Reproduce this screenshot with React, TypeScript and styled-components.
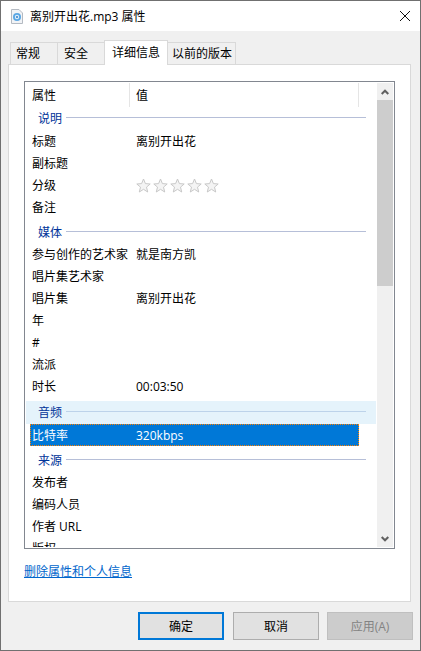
import React from 'react';
import styled, { createGlobalStyle } from 'styled-components';

const GlobalStyle = createGlobalStyle`
  html, body {
    margin: 0;
    padding: 0;
    background: #f0f0f0;
  }
  * {
    box-sizing: border-box;
  }
`;

type Row =
  | { kind: 'group'; label: string; hot?: boolean }
  | { kind: 'prop'; name: string; value?: string; stars?: boolean; selected?: boolean };

const rows: Row[] = [
  { kind: 'group', label: '说明' },
  { kind: 'prop', name: '标题', value: '离别开出花' },
  { kind: 'prop', name: '副标题' },
  { kind: 'prop', name: '分级', stars: true },
  { kind: 'prop', name: '备注' },
  { kind: 'group', label: '媒体' },
  { kind: 'prop', name: '参与创作的艺术家', value: '就是南方凯' },
  { kind: 'prop', name: '唱片集艺术家' },
  { kind: 'prop', name: '唱片集', value: '离别开出花' },
  { kind: 'prop', name: '年' },
  { kind: 'prop', name: '#' },
  { kind: 'prop', name: '流派' },
  { kind: 'prop', name: '时长', value: '00:03:50' },
  { kind: 'group', label: '音频', hot: true },
  { kind: 'prop', name: '比特率', value: '320kbps', selected: true },
  { kind: 'group', label: '来源' },
  { kind: 'prop', name: '发布者' },
  { kind: 'prop', name: '编码人员' },
  { kind: 'prop', name: '作者 URL' },
  { kind: 'prop', name: '版权' },
];

const FileIcon = () => (
  <svg width="12" height="15" viewBox="0 0 12 15">
    <path d="M0.5 0.5H8L11.5 4V14.5H0.5Z" fill="#f1f3f6" stroke="#b4bac2" />
    <circle cx="6" cy="8" r="4" fill="#5aa7e4" />
    <circle cx="6" cy="8" r="2.2" fill="#dcecf9" />
    <circle cx="6" cy="8" r="1" fill="#2f7fc8" />
  </svg>
);

const CloseIcon = () => (
  <svg width="10" height="10" viewBox="0 0 10 10">
    <path d="M0 0L10 10M10 0L0 10" stroke="#111" strokeWidth="1" fill="none" />
  </svg>
);

const Star = () => (
  <svg width="15" height="15" viewBox="0 0 15 15">
    <path
      d="M7.5 1L9.4 5.6L14.2 6L10.5 9.1L11.7 14L7.5 11.3L3.3 14L4.5 9.1L0.8 6L5.6 5.6Z"
      fill="#f4f4f4"
      stroke="#c8c8c8"
    />
  </svg>
);

const Chevron = ({ down }: { down?: boolean }) => (
  <svg width="8" height="6" viewBox="0 0 8 6">
    <path
      d={down ? 'M0.7 1L4 4.3L7.3 1' : 'M0.7 5L4 1.7L7.3 5'}
      stroke="#606060"
      strokeWidth="2"
      fill="none"
    />
  </svg>
);

export default function App() {
  return (
    <>
      <GlobalStyle />
      <Dialog>
        <TitleBar>
          <FileIcon />
          <TitleText>离别开出花.mp3 属性</TitleText>
          <CloseBtn>
            <CloseIcon />
          </CloseBtn>
        </TitleBar>
        <Body>
          <Tabs>
            <Tab $w={48} $pad={5}>
              常规
            </Tab>
            <Tab $w={48} $pad={6}>
              安全
            </Tab>
            <Tab $w={64} $pad={7} $active>
              详细信息
            </Tab>
            <Tab $w={69} $pad={4}>
              以前的版本
            </Tab>
          </Tabs>
          <Panel>
            <List>
              <ListMain>
                <Header>
                  <HeadCell $w={104}>属性</HeadCell>
                  <HeadCell $w={229}>值</HeadCell>
                </Header>
                <Rows>
                  {rows.map((row, i) =>
                    row.kind === 'group' ? (
                      <Group key={i} $hot={row.hot}>
                        <GroupLabel>{row.label}</GroupLabel>
                        <GroupLine $hot={row.hot} />
                      </Group>
                    ) : (
                      <PropRow key={i} $selected={row.selected}>
                        <PropName>{row.name}</PropName>
                        {row.stars ? (
                          <Stars>
                            {[0, 1, 2, 3, 4].map((s) => (
                              <Star key={s} />
                            ))}
                          </Stars>
                        ) : (
                          <span>{row.value}</span>
                        )}
                      </PropRow>
                    ),
                  )}
                </Rows>
              </ListMain>
              <ScrollBar>
                <ScrollBtn>
                  <Chevron />
                </ScrollBtn>
                <Track>
                  <Thumb />
                </Track>
                <ScrollBtn>
                  <Chevron down />
                </ScrollBtn>
              </ScrollBar>
            </List>
            <RemoveLink href="#">删除属性和个人信息</RemoveLink>
          </Panel>
          <Footer>
            <Button $variant="primary">确定</Button>
            <Button>取消</Button>
            <Button $variant="disabled">应用(A)</Button>
          </Footer>
        </Body>
      </Dialog>
    </>
  );
}

const Dialog = styled.div`
  width: 421px;
  height: 651px;
  display: flex;
  flex-direction: column;
  border: 1px solid #707070;
  overflow: hidden;
  font-family: 'Open Sans', 'Noto Sans CJK SC', sans-serif;
  font-size: 12px;
  color: #000;
  background: #f0f0f0;
`;

const TitleBar = styled.div`
  height: 30px;
  flex: none;
  display: flex;
  align-items: center;
  padding-left: 10px;
  background: #fff;
`;

const TitleText = styled.span`
  margin-left: 7px;
  flex: 1;
`;

const CloseBtn = styled.div`
  width: 22px;
  height: 30px;
  display: flex;
  align-items: center;
  padding-right: 10px;
  justify-content: flex-end;
`;

const Body = styled.div`
  flex: 1;
  display: flex;
  flex-direction: column;
  padding: 9px 9px 0 7px;
`;

const Tabs = styled.div`
  display: flex;
  align-items: flex-end;
  height: 25px;
  padding-left: 3px;
  margin-bottom: -1px;
  position: relative;
  z-index: 1;
`;

const Tab = styled.div<{ $w: number; $pad: number; $active?: boolean }>`
  width: ${(p) => p.$w}px;
  height: ${(p) => (p.$active ? 25 : 23)}px;
  display: flex;
  align-items: center;
  padding-left: ${(p) => p.$pad}px;
  padding-bottom: ${(p) => (p.$active ? 2 : 1)}px;
  margin-left: -1px;
  position: relative;
  z-index: ${(p) => (p.$active ? 1 : 0)};
  background: ${(p) => (p.$active ? '#fff' : '#f0f0f0')};
  border: 1px solid #d9d9d9;
  border-bottom: ${(p) => (p.$active ? 'none' : '1px solid #d9d9d9')};
`;

const Panel = styled.div`
  height: 538px;
  flex: none;
  background: #fff;
  border: 1px solid #d9d9d9;
  padding: 16px 15px 0 15px;
`;

const List = styled.div`
  width: 371px;
  height: 468px;
  display: flex;
  border: 1px solid #828790;
  padding: 1px;
`;

const ListMain = styled.div`
  width: 351px;
  flex: none;
  display: flex;
  flex-direction: column;
  overflow: hidden;
`;

const Header = styled.div`
  height: 24px;
  flex: none;
  display: flex;
`;

const HeadCell = styled.div<{ $w: number }>`
  width: ${(p) => p.$w}px;
  padding-left: 6px;
  border-right: 1px solid #e5e5e5;
  display: flex;
  align-items: center;
`;

const Rows = styled.div`
  flex: 1;
  overflow: hidden;
`;

const Group = styled.div<{ $hot?: boolean }>`
  height: ${(p) => (p.$hot ? 23 : 25)}px;
  margin-top: ${(p) => (p.$hot ? 4 : 0)}px;
  padding: ${(p) => (p.$hot ? '0 10px 2px 12px' : '2px 10px 0 12px')};
  width: 350px;
  display: flex;
  align-items: center;
  background: ${(p) => (p.$hot ? '#e5f3fb' : 'transparent')};

  &:first-child {
    height: 23px;
    padding-top: 0;
    padding-bottom: 2px;
  }
`;

const GroupLabel = styled.span`
  color: #003399;
  margin-right: 4px;
`;

const GroupLine = styled.div<{ $hot?: boolean }>`
  flex: 1;
  height: 1px;
  background: ${(p) => (p.$hot ? '#bdd3ea' : '#b6bfd8')};
`;

const PropRow = styled.div<{ $selected?: boolean }>`
  height: 22px;
  width: 329px;
  margin-left: 4px;
  padding-left: 1px;
  display: flex;
  align-items: center;
  color: ${(p) => (p.$selected ? '#fff' : '#000')};
  background: ${(p) => (p.$selected ? '#0078d7' : 'transparent')};
  border: 1px ${(p) => (p.$selected ? 'dotted #ff8000' : 'solid transparent')};
`;

const PropName = styled.span`
  width: 104px;
  flex: none;
`;

const Stars = styled.div`
  display: flex;
  gap: 2px;
`;

const ScrollBar = styled.div`
  width: 16px;
  flex: none;
  display: flex;
  flex-direction: column;
  background: #f0f0f0;
`;

const ScrollBtn = styled.div`
  height: 17px;
  flex: none;
  display: flex;
  align-items: center;
  justify-content: center;
`;

const Track = styled.div`
  flex: 1;
`;

const Thumb = styled.div`
  height: 186px;
  background: #cdcdcd;
`;

const RemoveLink = styled.a`
  display: inline-block;
  margin-top: 13px;
  color: #0066cc;
  text-decoration: underline;
`;

const Footer = styled.div`
  display: flex;
  justify-content: flex-end;
  gap: 8px;
  margin-top: 10px;
  margin-right: -2px;
`;

const Button = styled.div<{ $variant?: 'primary' | 'disabled' }>`
  width: 86px;
  height: 28px;
  margin-right: ${(p) => (p.$variant === 'primary' ? 1 : 0)}px;
  display: flex;
  align-items: center;
  justify-content: center;
  background: ${(p) => (p.$variant === 'disabled' ? '#cccccc' : '#e1e1e1')};
  color: ${(p) => (p.$variant === 'disabled' ? '#838383' : '#000')};
  border: ${(p) =>
    p.$variant === 'primary'
      ? '2px solid #0078d7'
      : p.$variant === 'disabled'
        ? '1px solid #bfbfbf'
        : '1px solid #adadad'};
`;
